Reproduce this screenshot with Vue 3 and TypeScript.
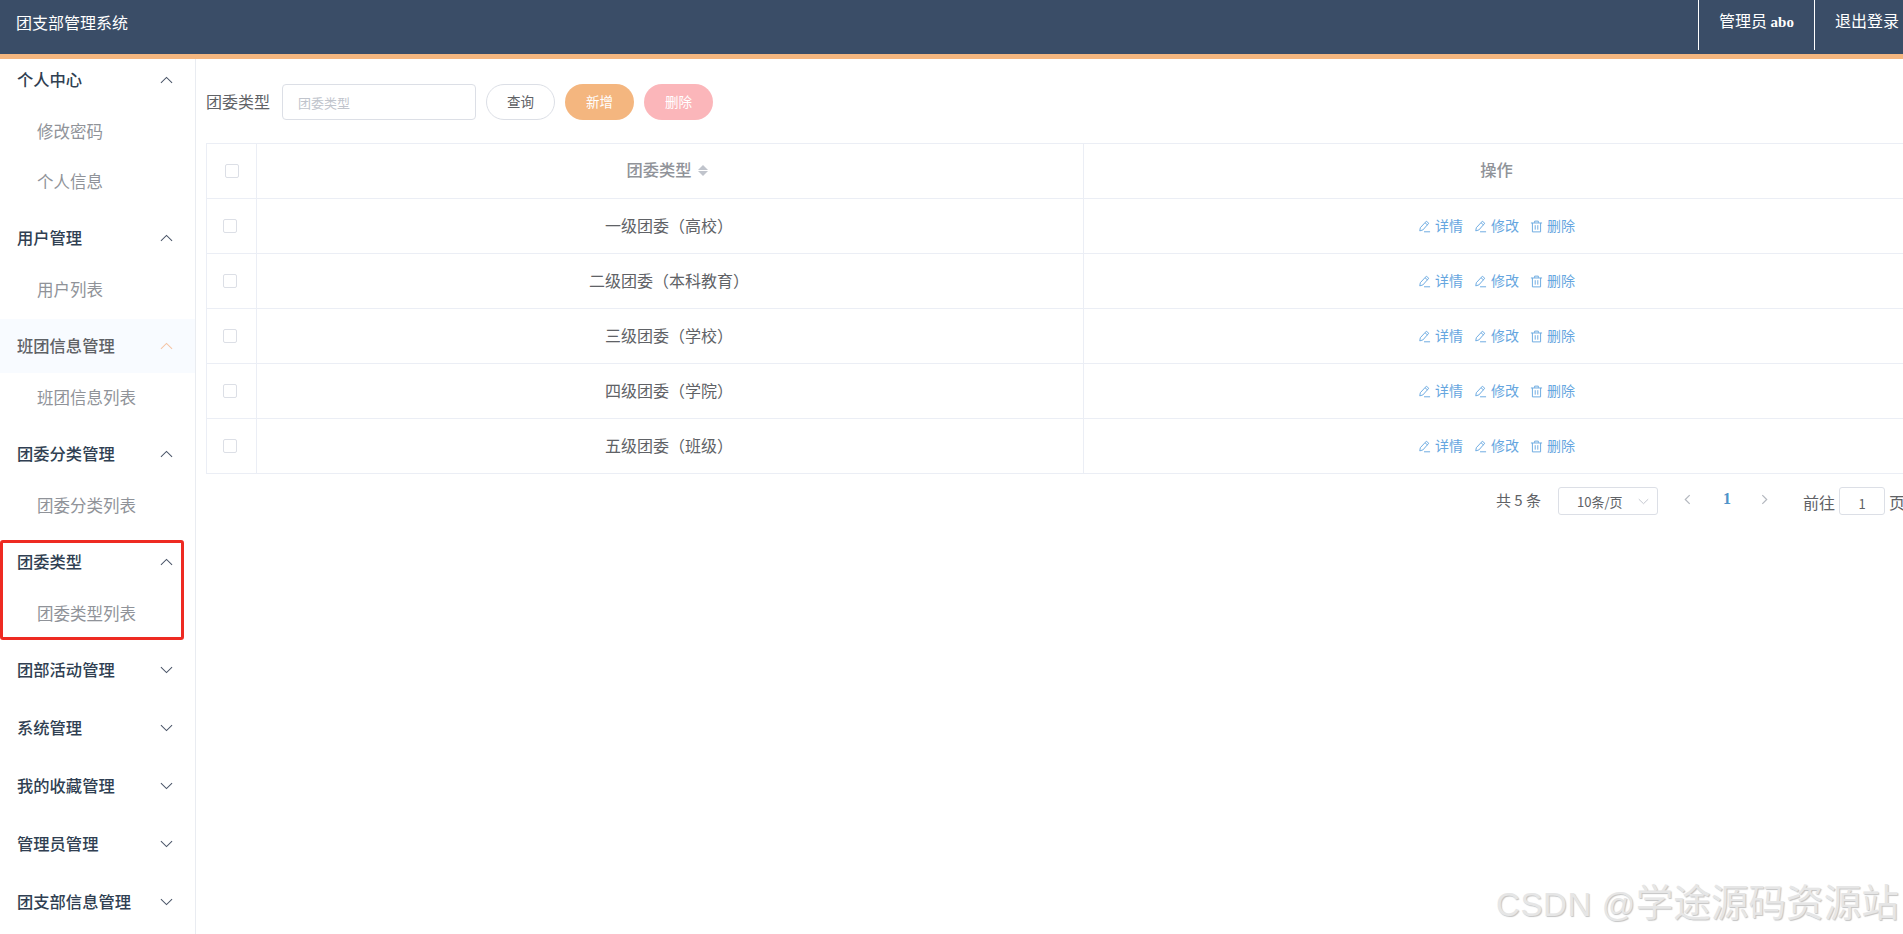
<script setup lang="ts">
interface Group { title: string; open: boolean; hover?: boolean; items: string[] }
const groups: Group[] = [
  { title: '个人中心', open: true, items: ['修改密码', '个人信息'] },
  { title: '用户管理', open: true, items: ['用户列表'] },
  { title: '班团信息管理', open: true, hover: true, items: ['班团信息列表'] },
  { title: '团委分类管理', open: true, items: ['团委分类列表'] },
  { title: '团委类型', open: true, items: ['团委类型列表'] },
  { title: '团部活动管理', open: false, items: [] },
  { title: '系统管理', open: false, items: [] },
  { title: '我的收藏管理', open: false, items: [] },
  { title: '管理员管理', open: false, items: [] },
  { title: '团支部信息管理', open: false, items: [] },
]
const rows = ['一级团委（高校）', '二级团委（本科教育）', '三级团委（学校）', '四级团委（学院）', '五级团委（班级）']
</script>

<template>
  <div class="page">
    <header class="topbar">
      <div class="brand">团支部管理系统</div>
      <div class="top-actions">
        <div class="top-item user">管理员 <b>abo</b></div>
        <div class="top-item logout">退出登录</div>
      </div>
    </header>
    <div class="body">
      <aside class="side">
        <div class="menu">
          <div v-for="g in groups" :key="g.title" class="group">
            <div class="group-head" :class="{ hover: g.hover }">
              <span class="g-title">{{ g.title }}</span>
              <svg class="arrow" viewBox="0 0 14 8" width="13" height="8">
                <path v-if="g.open" d="M1 7L7 1.2L13 7" />
                <path v-else d="M1 1L7 6.8L13 1" />
              </svg>
            </div>
            <div v-for="i in g.items" :key="i" class="sub">{{ i }}</div>
          </div>
        </div>
      </aside>
      <main class="main">
        <div class="filter">
          <label class="f-label">团委类型</label>
          <div class="f-input">团委类型</div>
          <button class="btn plain">查询</button>
          <button class="btn add">新增</button>
          <button class="btn del">删除</button>
        </div>
        <div class="table">
          <div class="tr head">
            <div class="td c-check"><span class="check"></span></div>
            <div class="td c-name">
              团委类型
              <span class="carets"><i class="up"></i><i class="down"></i></span>
            </div>
            <div class="td c-op">操作</div>
          </div>
          <div v-for="r in rows" :key="r" class="tr">
            <div class="td c-check"><span class="check"></span></div>
            <div class="td c-name">{{ r }}</div>
            <div class="td c-op ops">
              <a class="op">
                <svg viewBox="0 0 14 14" width="13" height="13"><path d="M9 1.3l2.6 2.2-6.3 7.2-3.4 1 .6-3.4z M7.6 3l2.6 2.2 M6.5 12.7H13" /></svg>
                详情
              </a>
              <a class="op">
                <svg viewBox="0 0 14 14" width="13" height="13"><path d="M9 1.3l2.6 2.2-6.3 7.2-3.4 1 .6-3.4z M7.6 3l2.6 2.2 M6.5 12.7H13" /></svg>
                修改
              </a>
              <a class="op">
                <svg viewBox="0 0 14 14" width="13" height="13"><path d="M1 3.2H13 M5 3V1.2H9V3 M2.6 3.2V12.8H11.4V3.2 M5.6 5.6V10.4 M8.4 5.6V10.4" /></svg>
                删除
              </a>
            </div>
          </div>
        </div>
        <div class="pager">
          <span class="total">共 5 条</span>
          <div class="size">
            <span>10条/页</span>
            <svg viewBox="0 0 14 8" width="11" height="7"><path d="M1 1L7 6.8L13 1" /></svg>
          </div>
          <span class="nav">
            <svg viewBox="0 0 8 12" width="7" height="11"><path d="M6.5 1L1.5 6L6.5 11" /></svg>
          </span>
          <span class="cur">1</span>
          <span class="nav next">
            <svg viewBox="0 0 8 12" width="7" height="11"><path d="M1.5 1L6.5 6L1.5 11" /></svg>
          </span>
          <span class="goto">前往</span>
          <div class="jump">1</div>
          <span class="goto unit">页</span>
        </div>
      </main>
    </div>
    <div class="mark-box"></div>
    <div class="wm"><span class="wm-latin">CSDN @</span><span class="wm-cjk">学途源码资源站</span></div>
  </div>
</template>

<style>
html, body { margin: 0; overflow: hidden; background: #fff; }
</style>

<style scoped>
.page {
  width: 1903px;
  height: 934px;
  overflow: hidden;
  position: relative;
  background: #fff;
  font-family: "Noto Sans CJK SC", "Liberation Sans", sans-serif;
}
.topbar {
  box-sizing: border-box;
  height: 59px;
  background: #3a4d67;
  border-bottom: 5px solid #f4b67f;
  display: flex;
  justify-content: space-between;
  color: #fff;
  position: relative;
  z-index: 2;
}
.brand { font-size: 16px; line-height: 45px; padding-left: 16px; }
.top-actions { display: flex; height: 50px; }
.top-item {
  border-left: 1px solid #fff;
  font-size: 16px;
  line-height: 41px;
  box-sizing: border-box;
}
.user { width: 116px; padding-left: 20px; }
.user b { font-family: "Liberation Serif", serif; font-size: 15px; }
.logout { width: 89px; padding-left: 20px; white-space: nowrap; }
.body { display: flex; height: 875px; }
.side {
  width: 196px;
  flex: none;
  box-sizing: border-box;
  border-right: 1px solid #e9ecf1;
  overflow: hidden;
}
.menu { margin-top: -6px; }
.group { margin-bottom: 4px; }
.group-head {
  height: 54px;
  display: flex;
  align-items: center;
  justify-content: space-between;
  padding: 0 22px 0 17px;
  font-size: 16.3px;
  font-weight: 500;
  color: #303f52;
}
.g-title { padding-bottom: 3px; }
.group-head.hover { background: #f8fbff; color: #5f6266; }
.group-head.hover .arrow path { stroke: #f4c4a4; }
.arrow path { fill: none; stroke: #4a5568; stroke-width: 1.1; }
.sub {
  height: 50px;
  line-height: 48px;
  padding-left: 37px;
  font-size: 16.5px;
  color: #909399;
}
.main { flex: 1; min-width: 0; padding: 25px 0 0 10px; overflow: hidden; }
.filter { display: flex; align-items: center; height: 35px; margin-bottom: 24px; }
.f-label { font-size: 16px; color: #606266; width: 76px; flex: none; padding-bottom: 2px; }
.f-input {
  box-sizing: border-box;
  width: 194px;
  height: 36px;
  flex: none;
  border: 1px solid #dcdfe6;
  border-radius: 4px;
  padding-left: 15px;
  font-size: 13px;
  line-height: 36px;
  color: #c0c4cc;
}
.btn {
  box-sizing: border-box;
  height: 36px;
  width: 69px;
  flex: none;
  margin-left: 10px;
  border-radius: 18px;
  border: 1px solid transparent;
  font: inherit;
  font-size: 13.5px;
  padding: 0 0 2px;
  color: #fff;
}
.plain { background: #fff; border-color: #dcdfe6; color: #606266; }
.add { background: #f4b67f; }
.del { background: #fbb6ba; }
.table {
  width: 1703px;
  border: 1px solid #ebeef5;
  border-width: 1px 0 0 1px;
  box-sizing: border-box;
}
.tr { display: flex; height: 55px; border-bottom: 1px solid #ebeef5; box-sizing: border-box; }
.td { display: flex; align-items: center; justify-content: center; box-sizing: border-box; font-size: 16px; color: #606266; padding-bottom: 2px; }
.c-check { width: 50px; flex: none; border-right: 1px solid #ebeef5; padding: 0 4px 0 0; }
.c-name { width: 827px; flex: none; border-right: 1px solid #ebeef5; padding-right: 2px; }
.c-op { flex: 1; }
.head .td { font-size: 16.3px; font-weight: 500; color: #909399; padding-bottom: 4px; }
.head .c-name { padding-right: 6px; }
.head .c-check { padding: 0; }
.check {
  box-sizing: border-box;
  width: 14px;
  height: 14px;
  border: 1px solid #dcdfe6;
  border-radius: 2px;
  display: block;
}
.carets { display: inline-block; width: 10px; height: 14px; margin-left: 6px; position: relative; top: 2px; }
.carets i { position: absolute; left: 0; border: 5px solid transparent; }
.carets .up { border-bottom-color: #c0c4cc; top: -4px; }
.carets .down { border-top-color: #c0c4cc; bottom: -3px; }
.ops { gap: 11px; padding-bottom: 2px; }
.op { display: inline-flex; align-items: center; gap: 4px; font-size: 14px; color: #66a6e0; }
.op svg { position: relative; top: 1px; }
.op svg path { fill: none; stroke: #66a6e0; stroke-width: 1; }
.pager { display: flex; align-items: center; height: 30px; margin-top: 12px; font-size: 15px; color: #606266; white-space: nowrap; }
.total { margin-left: 1290px; width: 62px; flex: none; padding-bottom: 4px; }
.size {
  box-sizing: border-box;
  width: 100px;
  height: 28px;
  border: 1px solid #dcdfe6;
  border-radius: 3px;
  display: flex;
  align-items: center;
  justify-content: space-between;
  padding: 0 8px 0 18px;
  font-size: 13px;
  flex: none;
}
.size path { fill: none; stroke: #c0c4cc; stroke-width: 1.2; }
.nav { width: 7px; flex: none; margin-left: 26px; display: flex; padding-bottom: 4px; }
.nav path { fill: none; stroke: #b4b8bf; stroke-width: 1.4; }
.cur { width: 10px; margin-left: 32px; font-family: "Liberation Serif", serif; font-weight: 700; font-size: 16px; color: #4f93c9; flex: none; padding-bottom: 4px; }
.next { margin-left: 28px; }
.goto { margin-left: 35px; flex: none; font-size: 16px; padding-top: 2px; }
.jump {
  box-sizing: border-box;
  width: 46px;
  height: 28px;
  margin-left: 4px;
  flex: none;
  border: 1px solid #dcdfe6;
  border-radius: 3px;
  text-align: center;
  line-height: 32px;
  font-size: 13px;
}
.unit { margin-left: 4px; }
.mark-box {
  position: absolute;
  left: 0;
  top: 540px;
  width: 184px;
  height: 100px;
  box-sizing: border-box;
  border: 3px solid #ee2a22;
  border-radius: 3px;
  pointer-events: none;
}
.wm {
  position: absolute;
  left: 1496px;
  top: 880px;
  line-height: 46px;
  white-space: nowrap;
  color: #e6e6e6;
  text-shadow: 1px 1px 1px #c4c4c4;
  font-family: "Liberation Sans", "Noto Sans CJK SC", sans-serif;
}
.wm-latin { font-size: 33px; letter-spacing: .6px; }
.wm-cjk { font-size: 37.6px; }
</style>
